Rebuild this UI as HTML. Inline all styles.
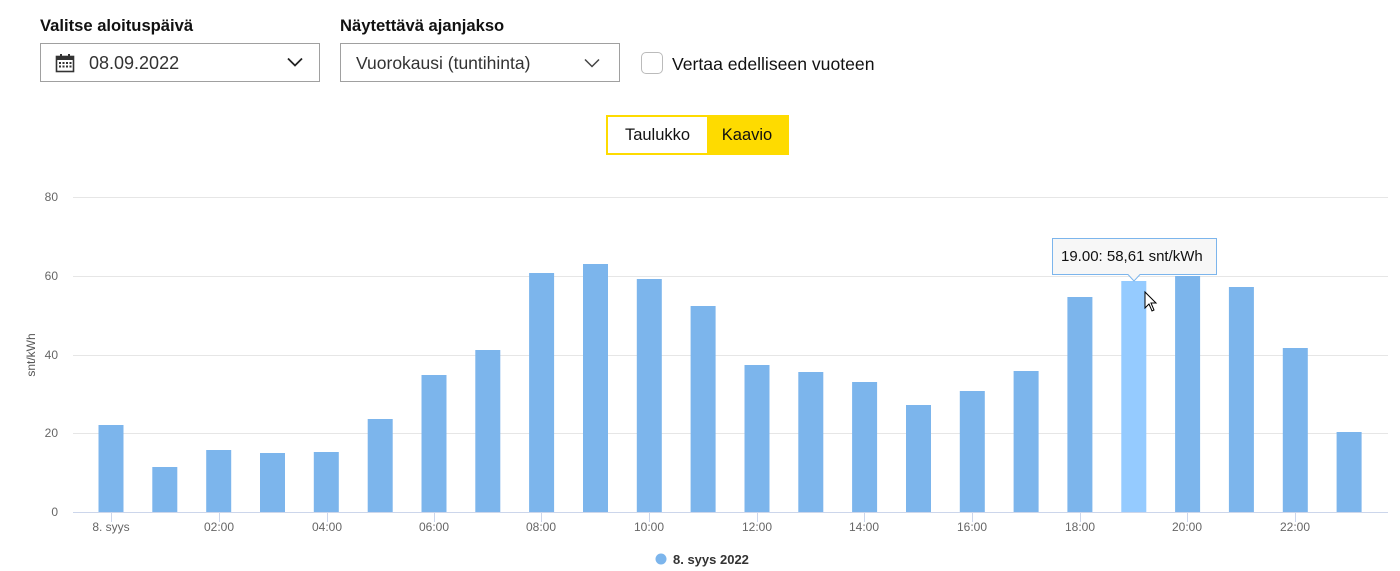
<!DOCTYPE html>
<html><head><meta charset="utf-8"><style>
body{margin:0;width:1400px;height:571px;background:#fff;font-family:"Liberation Sans",sans-serif;position:relative;overflow:hidden}
.lbl{position:absolute;top:16px;font-size:16.6px;font-weight:bold;color:#111}
.sel{position:absolute;top:43px;height:39px;border:1px solid #a0a0a0;box-sizing:border-box;color:#333}
.sel span{position:absolute;top:9px}
.cb{position:absolute;left:641px;top:52px;width:20px;height:20px;border:1px solid #bbb;border-radius:5px}
.tog{position:absolute;left:606px;top:115px;height:40px;border:2px solid #fedb00;box-sizing:border-box;display:flex;font-size:16.5px;color:#111}
.tog div{line-height:36px;text-align:center}
</style></head><body>
<div class="lbl" style="left:40px">Valitse aloituspäivä</div>
<div class="lbl" style="left:340px">Näytettävä ajanjakso</div>
<div class="sel" style="left:40px;width:280px;font-size:18px">
<svg style="position:absolute;left:14px;top:9px" width="20" height="20" viewBox="0 0 20 20"><rect x="1.5" y="3.5" width="17" height="15" fill="none" stroke="#333" stroke-width="1.6"/><rect x="1.5" y="3.5" width="17" height="3.5" fill="#333"/><line x1="6" y1="1" x2="6" y2="5" stroke="#333" stroke-width="2"/><line x1="14" y1="1" x2="14" y2="5" stroke="#333" stroke-width="2"/><g fill="#333"><rect x="4" y="9" width="2" height="2"/><rect x="7.5" y="9" width="2" height="2"/><rect x="11" y="9" width="2" height="2"/><rect x="14.5" y="9" width="2" height="2"/><rect x="4" y="12.5" width="2" height="2"/><rect x="7.5" y="12.5" width="2" height="2"/><rect x="11" y="12.5" width="2" height="2"/><rect x="14.5" y="12.5" width="2" height="2"/></g></svg>
<span style="left:48px">08.09.2022</span>
<svg style="position:absolute;left:246px;top:13px" width="16" height="10" viewBox="0 0 16 10"><path d="M1 1.5L8 8.5L15 1.5" fill="none" stroke="#222" stroke-width="1.8"/></svg>
</div>
<div class="sel" style="left:340px;width:280px;font-size:17.5px">
<span style="left:15px">Vuorokausi (tuntihinta)</span>
<svg style="position:absolute;left:243px;top:14px" width="16" height="10" viewBox="0 0 16 10"><path d="M1 1.5L8 8.5L15 1.5" fill="none" stroke="#444" stroke-width="1.5"/></svg>
</div>
<div class="cb"></div>
<div style="position:absolute;left:672px;top:54px;font-size:17.6px;color:#111">Vertaa edelliseen vuoteen</div>
<div class="tog"><div style="background:#fff;width:99px">Taulukko</div><div style="background:#fedb00;width:80px">Kaavio</div></div>

<svg style="position:absolute;left:0;top:0" width="1400" height="571">
<g stroke="#e6e6e6" stroke-width="1"><line x1="73" y1="197.5" x2="1388" y2="197.5"/><line x1="73" y1="276.5" x2="1388" y2="276.5"/><line x1="73" y1="355.5" x2="1388" y2="355.5"/><line x1="73" y1="433.5" x2="1388" y2="433.5"/></g>
<g font-size="12" fill="#666" text-anchor="end" font-family="Liberation Sans"><text x="58" y="201">80</text><text x="58" y="280">60</text><text x="58" y="359">40</text><text x="58" y="437">20</text><text x="58" y="516">0</text></g>
<text transform="translate(35,355) rotate(-90)" font-size="12" fill="#555" text-anchor="middle">snt/kWh</text>
<g fill="#7cb5ec">
<rect x="98.5" y="425" width="25" height="87"/>
<rect x="152.3" y="467" width="25" height="45"/>
<rect x="206.2" y="450" width="25" height="62"/>
<rect x="260" y="453" width="25" height="59"/>
<rect x="313.8" y="452" width="25" height="60"/>
<rect x="367.7" y="419" width="25" height="93"/>
<rect x="421.5" y="375" width="25" height="137"/>
<rect x="475.3" y="350" width="25" height="162"/>
<rect x="529.1" y="273" width="25" height="239"/>
<rect x="583" y="264" width="25" height="248"/>
<rect x="636.8" y="279" width="25" height="233"/>
<rect x="690.6" y="306" width="25" height="206"/>
<rect x="744.5" y="365" width="25" height="147"/>
<rect x="798.3" y="372" width="25" height="140"/>
<rect x="852.1" y="382" width="25" height="130"/>
<rect x="906" y="405" width="25" height="107"/>
<rect x="959.8" y="391" width="25" height="121"/>
<rect x="1013.6" y="371" width="25" height="141"/>
<rect x="1067.4" y="297" width="25" height="215"/>
<rect x="1121.3" y="281" width="25" height="231" fill="#95cbff"/>
<rect x="1175.1" y="276" width="25" height="236"/>
<rect x="1228.9" y="287" width="25" height="225"/>
<rect x="1282.8" y="348" width="25" height="164"/>
<rect x="1336.6" y="432" width="25" height="80"/>
</g>
<line x1="73" y1="512.5" x2="1388" y2="512.5" stroke="#ccd6eb"/>
<g stroke="#ccd6eb"><line x1="111.5" y1="512" x2="111.5" y2="522"/><line x1="219.5" y1="512" x2="219.5" y2="522"/><line x1="327.5" y1="512" x2="327.5" y2="522"/><line x1="434.5" y1="512" x2="434.5" y2="522"/><line x1="541.5" y1="512" x2="541.5" y2="522"/><line x1="649.5" y1="512" x2="649.5" y2="522"/><line x1="757.5" y1="512" x2="757.5" y2="522"/><line x1="864.5" y1="512" x2="864.5" y2="522"/><line x1="972.5" y1="512" x2="972.5" y2="522"/><line x1="1080.5" y1="512" x2="1080.5" y2="522"/><line x1="1187.5" y1="512" x2="1187.5" y2="522"/><line x1="1295.5" y1="512" x2="1295.5" y2="522"/></g>
<g font-size="12" fill="#666" text-anchor="middle"><text x="111" y="531">8. syys</text><text x="219" y="531">02:00</text><text x="327" y="531">04:00</text><text x="434" y="531">06:00</text><text x="541" y="531">08:00</text><text x="649" y="531">10:00</text><text x="757" y="531">12:00</text><text x="864" y="531">14:00</text><text x="972" y="531">16:00</text><text x="1080" y="531">18:00</text><text x="1187" y="531">20:00</text><text x="1295" y="531">22:00</text></g>
<circle cx="661" cy="559" r="5.5" fill="#7cb5ec"/>
<text x="673" y="564" font-size="13" font-weight="bold" fill="#333">8. syys 2022</text>
<path d="M1052.5 238.5H1216.5V274.5H1140L1134 281L1128 274.5H1052.5Z" fill="#f7f7f7" fill-opacity="0.95" stroke="#7cb5ec"/>
<text x="1061" y="261" font-size="15" fill="#111">19.00:  58,61 snt/kWh</text>
<path d="M1145 292V308L1149 304L1152 311L1154 310L1151 303L1156 303Z" fill="#fff" stroke="#000" stroke-width="1"/>
</svg>
</body></html>
